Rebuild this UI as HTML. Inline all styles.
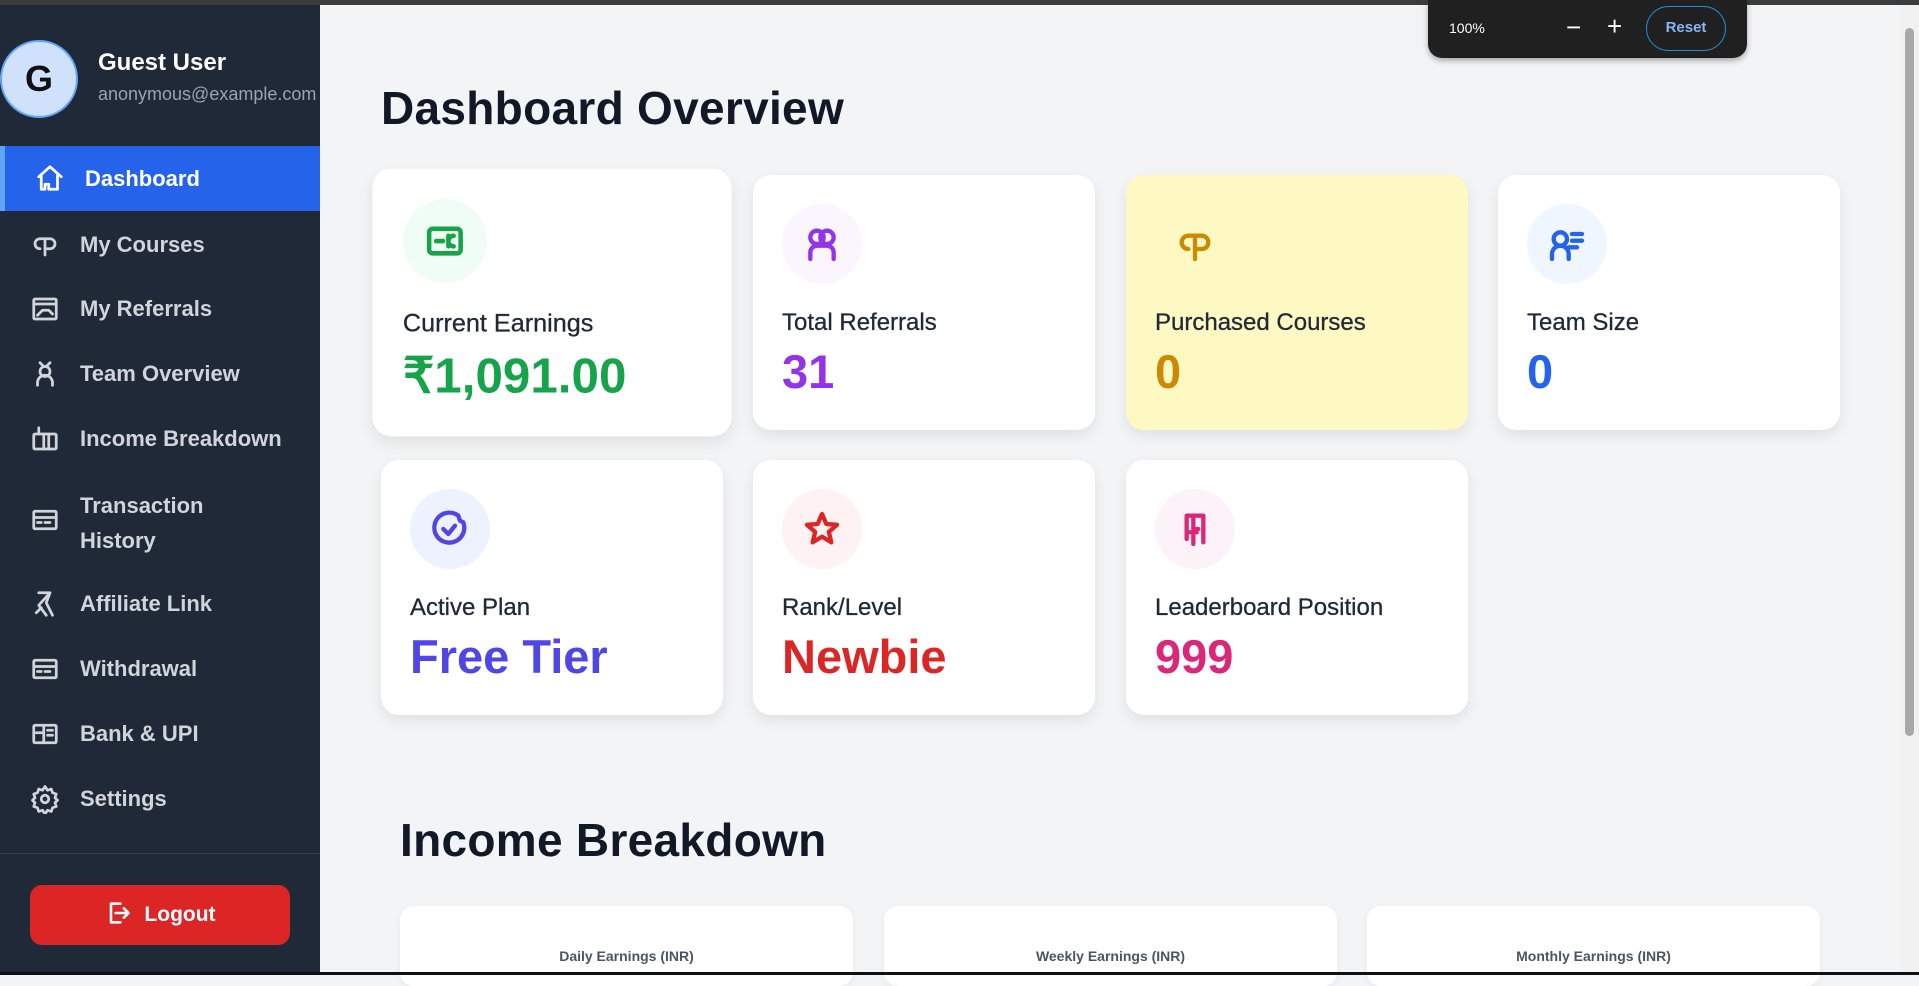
<!DOCTYPE html>
<html><head><meta charset="utf-8"><style>
*{box-sizing:border-box;margin:0;padding:0}
body{width:1919px;height:975px;overflow:hidden;background:#f3f4f6;font-family:"Liberation Sans",Arial,sans-serif;position:relative}
.topbar{position:absolute;left:0;top:0;width:1919px;height:5px;background:#3c3c3c;z-index:5}
.side{position:absolute;left:0;top:5px;width:320px;height:970px;background:#1f2937}
.avatar{position:absolute;left:0;top:35px;width:78px;height:78px;border-radius:50%;background:#cfe1fb;border:2px solid #60a5fa;color:#111;font-size:36px;font-weight:bold;text-align:center;line-height:74px}
.name{position:absolute;left:98px;top:44px;color:#fff;font-size:24px;font-weight:bold}
.email{position:absolute;left:98px;top:79px;color:#9ca3af;font-size:18px;white-space:nowrap}
.nav{position:absolute;left:0;width:320px;color:#d1d5db;font-size:22px;font-weight:bold}
.nav svg{position:absolute;left:30px;width:30px;height:30px;fill:none;stroke:currentColor;stroke-width:2.2;stroke-linecap:round;stroke-linejoin:round}
.nav span{position:absolute;left:80px}
.active{background:#2563eb;color:#fff;border-left:5px solid #60a5fa}
.divider{position:absolute;left:0;top:853px;width:320px;height:1px;background:#374151}
.logout{position:absolute;left:30px;top:885px;width:260px;height:60px;background:#dc2626;border-radius:12px;color:#fff;font-size:21px;font-weight:bold;text-align:center;line-height:60px}
.logout svg{vertical-align:middle;margin-right:12px;width:28px;height:28px;fill:none;stroke:#fff;stroke-width:2.2;stroke-linecap:round;stroke-linejoin:round;margin-top:-4px}
h1{position:absolute;left:381px;top:81px;font-size:46px;font-weight:bold;color:#111827;letter-spacing:0.3px}
h2{position:absolute;left:400px;top:813px;font-size:46px;font-weight:bold;color:#111827;letter-spacing:0.3px}
.card{position:absolute;width:342px;height:255px;background:#fff;border-radius:18px;box-shadow:0 6px 14px rgba(0,0,0,.08)}
.ic{position:absolute;left:29px;top:29px;width:80px;height:80px;border-radius:50%}
.ic svg{position:absolute;left:20px;top:20px;width:40px;height:40px;fill:none;stroke-width:2.6;stroke-linecap:round;stroke-linejoin:round}
.lbl{position:absolute;left:29px;top:134px;font-size:24px;color:#1f2937;-webkit-text-stroke:0.3px #1f2937}
.val{position:absolute;left:29px;top:169px;font-size:47px;font-weight:bold}
.big{transform:scale(1.05)}
.zoom{position:absolute;left:1428px;top:0;width:319px;height:58px;background:#202020;border-radius:0 0 14px 14px;box-shadow:0 3px 6px rgba(0,0,0,.3);color:#fff;z-index:6}
.reset{position:absolute;left:218px;top:6px;width:80px;height:45px;border:1.5px solid #1d8fd8;border-radius:23px;color:#8ab4f8;font-size:15px;font-weight:bold;text-align:center;line-height:42px}
.chart{position:absolute;top:906px;width:453px;height:80px;background:#fff;border-radius:14px;box-shadow:0 2px 8px rgba(0,0,0,.05)}
.chart div{position:absolute;top:42px;width:100%;text-align:center;font-size:14px;font-weight:bold;color:#4b5563}
.sb{position:absolute;left:1900px;top:5px;width:19px;height:970px;background:#f1f1f1}
.thumb{position:absolute;left:1905px;top:28px;width:9px;height:708px;background:#a8a8a8;border-radius:5px}
.bot{position:absolute;left:0;top:972px;width:1919px;height:3px;background:#111}
</style></head><body>
<div class="topbar"></div>
<div class="side">
<div class="avatar">G</div>
<div class="name">Guest User</div>
<div class="email">anonymous@example.com</div>
<div class="nav active" style="top:141px;height:65px"><svg style="top:17px;left:30px" viewBox="0 0 24 24"><path d="M3 11L12 3l9 8M5 10v11h3v-4h3v4h7V10"/></svg><span style="top:20px;left:80px">Dashboard</span></div>
<div class="nav" style="top:225px"><svg viewBox="0 0 24 24"><path d="M12 20V7M4 11a4 4 0 0 1 4-4h8a4 4 0 0 1 0 8h-3M8 15a4 4 0 0 1-4-4"/></svg><span style="top:2px">My Courses</span></div>
<div class="nav" style="top:289px"><svg viewBox="0 0 24 24"><rect x="3" y="4" width="18" height="16" rx="1"/><path d="M3 8h18M6 17l4-4h5l3 3"/></svg><span style="top:2px">My Referrals</span></div>
<div class="nav" style="top:354px"><svg viewBox="0 0 24 24"><circle cx="12" cy="10" r="4"/><path d="M6 21v-2a6 6 0 0 1 12 0v2M8 3l3 3M16 3l-3 3"/></svg><span style="top:2px">Team Overview</span></div>
<div class="nav" style="top:419px"><svg viewBox="0 0 24 24"><rect x="3" y="8" width="18" height="12" rx="1"/><path d="M7 8V3M11 8v12M15 8v12"/></svg><span style="top:2px">Income Breakdown</span></div>
<div class="nav" style="top:486px"><svg style="top:14px" viewBox="0 0 24 24"><rect x="3" y="5" width="18" height="14" rx="1"/><path d="M3 10h18M6 14h3M12 14h4"/></svg><span style="top:-3px;line-height:35px">Transaction<br>History</span></div>
<div class="nav" style="top:584px"><svg viewBox="0 0 24 24"><path d="M7 3h9l-9 10 6 8M16 3l-3 8 5 10M5 19l4-4"/></svg><span style="top:2px">Affiliate Link</span></div>
<div class="nav" style="top:649px"><svg viewBox="0 0 24 24"><rect x="3" y="5" width="18" height="14" rx="1"/><path d="M3 10h18M6 14h3M12 14h4"/></svg><span style="top:2px">Withdrawal</span></div>
<div class="nav" style="top:714px"><svg viewBox="0 0 24 24"><rect x="3" y="5" width="18" height="14" rx="1"/><path d="M11 5v14M14 9h4M14 13h4M5 11h6"/></svg><span style="top:2px">Bank &amp; UPI</span></div>
<div class="nav" style="top:779px"><svg viewBox="0 0 24 24"><circle cx="12" cy="12" r="3"/><path d="M12 2l2 3 3-1 1 3 3 1-1 3 2 2-2 2 1 3-3 1-1 3-3-1-2 3-2-3-3 1-1-3-3-1 1-3-2-2 2-2-1-3 3-1 1-3 3 1z"/></svg><span style="top:2px">Settings</span></div>
</div>
<div class="divider"></div>
<div class="logout"><svg viewBox="0 0 24 24"><path d="M14 4H6v16h8M10 12h11M17 8l4 4-4 4"/></svg>Logout</div>

<h1>Dashboard Overview</h1>

<div class="card big" style="left:381px;top:175px"><div class="ic" style="background:#f0fdf4"><svg viewBox="0 0 24 24" style="stroke:#16a34a"><rect x="3" y="5" width="18" height="14" rx="2"/><path d="M7 12h4M14 9v6M17 9a3 3 0 0 0 0 6"/></svg></div><div class="lbl">Current Earnings</div><div class="val" style="color:#16a34a">₹1,091.00</div></div>
<div class="card" style="left:753px;top:175px"><div class="ic" style="background:#faf5ff"><svg viewBox="0 0 24 24" style="stroke:#9333ea"><circle cx="9" cy="8" r="4"/><circle cx="15" cy="8" r="4"/><path d="M5 21v-4a4 4 0 0 1 4-4h6a4 4 0 0 1 4 4v4"/></svg></div><div class="lbl">Total Referrals</div><div class="val" style="color:#9333ea">31</div></div>
<div class="card" style="left:1126px;top:175px;background:#fef9c3"><div class="ic"><svg viewBox="0 0 24 24" style="stroke:#ca8a04"><path d="M12 21V7M4 11a4 4 0 0 1 4-4h8a4 4 0 0 1 0 8h-3M8 15a4 4 0 0 1-4-4"/></svg></div><div class="lbl">Purchased Courses</div><div class="val" style="color:#ca8a04">0</div></div>
<div class="card" style="left:1498px;top:175px"><div class="ic" style="background:#eff6ff"><svg viewBox="0 0 24 24" style="stroke:#2563eb"><circle cx="8" cy="9" r="4"/><path d="M3 21v-3a5 5 0 0 1 10 0v3M15 6h6M15 10h6M13 14h5"/></svg></div><div class="lbl">Team Size</div><div class="val" style="color:#2563eb">0</div></div>

<div class="card" style="left:381px;top:460px"><div class="ic" style="background:#eef2ff"><svg viewBox="0 0 24 24" style="stroke:#4f46e5"><path d="M17 4a9 9 0 1 0 3 4l-2-1z"/><path d="M8 12l3 3 4-5"/></svg></div><div class="lbl">Active Plan</div><div class="val" style="color:#4f46e5">Free Tier</div></div>
<div class="card" style="left:753px;top:460px"><div class="ic" style="background:#fef2f2"><svg viewBox="0 0 24 24" style="stroke:#dc2626"><path d="M12 3l2.6 6 6.4.5-4.9 4.2 1.5 6.3L12 16.6 6.4 20l1.5-6.3L3 9.5 9.4 9z"/></svg></div><div class="lbl">Rank/Level</div><div class="val" style="color:#dc2626">Newbie</div></div>
<div class="card" style="left:1126px;top:460px"><div class="ic" style="background:#fdf2f8"><svg viewBox="0 0 24 24" style="stroke:#db2777"><path d="M7 4h10v16M7 4v14M11 4v8h3M11 16v5M9 14h4"/></svg></div><div class="lbl">Leaderboard Position</div><div class="val" style="color:#db2777">999</div></div>

<h2>Income Breakdown</h2>
<div class="chart" style="left:400px"><div>Daily Earnings (INR)</div></div>
<div class="chart" style="left:884px"><div>Weekly Earnings (INR)</div></div>
<div class="chart" style="left:1367px"><div>Monthly Earnings (INR)</div></div>

<div class="zoom"><span style="position:absolute;left:21px;top:20px;font-size:14px">100%</span><span style="position:absolute;left:138px;top:12px;font-size:26px">−</span><span style="position:absolute;left:179px;top:11px;font-size:26px">+</span><div class="reset">Reset</div></div>
<div class="sb"></div><div class="thumb"></div>
<div class="bot"></div>
</body></html>
